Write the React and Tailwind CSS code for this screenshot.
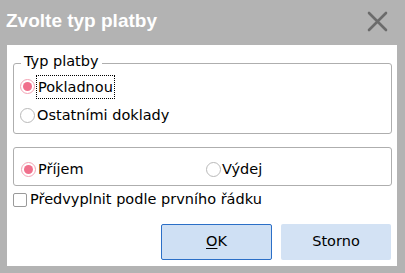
import { useState } from "react";

function Radio({ checked }) {
  return checked ? (
    <span className="w-[15px] h-[15px] rounded-full border border-[#f3a3b4] bg-white flex items-center justify-center shrink-0">
      <span className="w-[9px] h-[9px] rounded-full bg-[#f0708c]" />
    </span>
  ) : (
    <span className="w-[15px] h-[15px] rounded-full border border-[#b9b9b9] bg-white shrink-0" />
  );
}

export default function App() {
  const [typ, setTyp] = useState("pokladnou");
  const [smer, setSmer] = useState("prijem");
  const [predvyplnit, setPredvyplnit] = useState(false);

  return (
    <div className="w-[405px] h-[273px] bg-[#b3b3b3] flex flex-col font-['Tahoma','DejaVu_Sans',sans-serif] text-[14.5px] text-black">
      {/* Title bar */}
      <div className="h-[45px] flex items-center justify-between pl-[6px] pr-[17px]">
        <span className="text-white font-bold text-[19px] font-['Liberation_Sans',sans-serif] pb-[3px]">Zvolte typ platby</span>
        <svg width="21" height="21" viewBox="0 0 21 21" className="mb-[2px]">
          <path d="M2 2 L19 19 M19 2 L2 19" stroke="#6b6b6b" strokeWidth="2.6" strokeLinecap="round" />
        </svg>
      </div>

      {/* Body */}
      <div className="ml-[7px] mr-[8px] h-[221px] bg-white pl-[6px] pr-[5px] flex flex-col">
        {/* Typ platby group */}
        <div className="relative mt-[18px] h-[71px] border border-[#aeaeae] rounded-[3px] pl-[6px] pt-[10px] flex flex-col">
          <span className="absolute left-[7px] top-[-13px] px-[3px] bg-white leading-[20px]">Typ platby</span>
          <button onClick={() => setTyp("pokladnou")} className="flex items-center h-[25px]">
            <Radio checked={typ === "pokladnou"} />
            <span className="ml-[1px] px-[1px] border border-dotted border-black leading-[22px]">Pokladnou</span>
          </button>
          <button onClick={() => setTyp("ostatni")} className="flex items-center h-[25px] mt-[4px]">
            <Radio checked={typ === "ostatni"} />
            <span className="ml-[2px]">Ostatními doklady</span>
          </button>
        </div>

        {/* Příjem / Výdej */}
        <div className="mt-[13px] h-[39px] border border-[#aeaeae] rounded-[3px] pl-[7px] pt-[6px] flex items-center">
          <button onClick={() => setSmer("prijem")} className="flex items-center w-[185px]">
            <Radio checked={smer === "prijem"} />
            <span className="ml-[2px]">Příjem</span>
          </button>
          <button onClick={() => setSmer("vydej")} className="flex items-center">
            <Radio checked={smer === "vydej"} />
            <span className="ml-[1px]">Výdej</span>
          </button>
        </div>

        <button onClick={() => setPredvyplnit(!predvyplnit)} className="flex items-center mt-[7px] h-[14px]">
          <span className="w-[14px] h-[14px] border border-[#9a9a9a] rounded-[2px] bg-white shrink-0 flex items-center justify-center text-[11px]">
            {predvyplnit ? "✓" : ""}
          </span>
          <span className="ml-[3px]">Předvyplnit podle prvního řádku</span>
        </button>

        <div className="mt-[17px] flex justify-end gap-[9px] pr-[1px]">
          <button className="w-[111px] h-[36px] bg-[#cfe0f4] border border-[#2b6fc7] rounded-[2px]">
            <span className="underline underline-offset-2">O</span>K
          </button>
          <button className="w-[110px] h-[36px] bg-[#d3e2f4] rounded-[2px]">Storno</button>
        </div>
      </div>
    </div>
  );
}
